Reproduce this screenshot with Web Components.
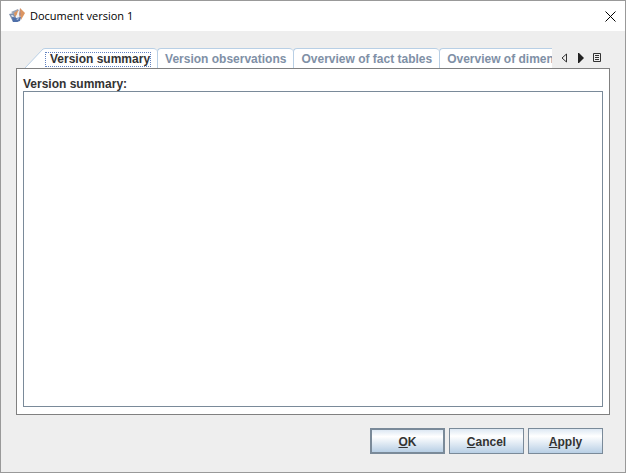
<!DOCTYPE html>
<html lang="en">
<head>
<meta charset="utf-8">
<meta name="viewport" content="width=device-width, initial-scale=1">
<title>Document version 1</title>
<style>
body {
    margin: 0;
    font: bold 12px/15px "Liberation Sans", Arial, sans-serif;
    color: #333;
    --line: #7a8a99;
    --tab-line: #b8cfe5;
    --panel-line: #808080;
}
</style>
</head>
<body>
<dialog-window>
    <title-bar slot="title">Document version 1</title-bar>
    <tab-pane>
        <tab-item slot="tab" active>Version summary</tab-item>
        <tab-item slot="tab">Version observations</tab-item>
        <tab-item slot="tab">Overview of fact tables</tab-item>
        <tab-item slot="tab">Overview of dimension tables</tab-item>
        <summary-form></summary-form>
    </tab-pane>
    <push-button slot="actions" primary><u>O</u>K</push-button>
    <push-button slot="actions"><u>C</u>ancel</push-button>
    <push-button slot="actions"><u>A</u>pply</push-button>
</dialog-window>

<script>
function template(html) {
  const t = document.createElement('template');
  t.innerHTML = html;
  return t;
}

class BaseElement extends HTMLElement {
  constructor() {
    super();
    this.attachShadow({mode: 'open'});
    this.shadowRoot.appendChild(this.constructor.template.content.cloneNode(true));
  }
}

class DialogWindow extends BaseElement {
  static template = template(`
<style>
:host {
    display: flex;
    flex-direction: column;
    box-sizing: border-box;
    height: 100vh;
    border: 1px solid #999;
    background: #eee;
}
main {
    flex: 1;
    display: flex;
    flex-direction: column;
    padding: 17px 15px 0;
    min-height: 0;
}
footer {
    display: flex;
    justify-content: flex-end;
    gap: 4px;
    padding: 13px 22px 18px;
}
</style>
<slot name="title"></slot>
<main><slot></slot></main>
<footer><slot name="actions"></slot></footer>
`);
}

class TitleBar extends BaseElement {
  static template = template(`
<style>
:host {
    display: flex;
    align-items: center;
    gap: 5px;
    height: 30px;
    padding: 0 7px 0 8px;
    background: #fff;
    color: #000;
    font: 11px/16px "Open Sans", "Noto Sans", sans-serif;
}
h1 {
    flex: 1;
    margin: 0;
    font: inherit;
}
button {
    display: flex;
    padding: 2px;
    border: 0;
    background: none;
    color: inherit;
}
svg { display: block; }
</style>
<svg width="16" height="16" viewBox="0 0 16 16" aria-hidden="true">
    <path d="M0 6l5-1 4 9H4z" fill="#7f90ad"/>
    <path d="M2 4l7-3 1 2-5 3z" fill="#98a3b6"/>
    <path d="M5 5l4-3v4L6 9z" fill="#dc965f"/>
    <path d="M9 3l3 3-1 4-4-1z" fill="#eef1f6"/>
    <path d="M11 0l5 5-4 7-1-6z" fill="#dc9562"/>
    <path d="M11 0l1 6-1 5-1-5z" fill="#ba8c7c"/>
    <path d="M3 9l4 1 5-1-1 4-3 1H4z" fill="#4f70aa"/>
    <path d="M2 7l2 0 1 2-2 0z" fill="#d3dae6"/>
    <path d="M7 11l3-1-1 2z" fill="#c4d0e4"/>
</svg>
<h1><slot></slot></h1>
<button type="button" aria-label="Close">
    <svg width="11" height="11" viewBox="0 0 11 11" fill="none" stroke="currentColor"><path d="M.5.5l10 10M10.500.5l-10 10"/></svg>
</button>
`);
}

class TabPane extends BaseElement {
  static template = template(`
<style>
:host {
    flex: 1;
    display: flex;
    flex-direction: column;
    min-height: 0;
}
.strip {
    display: flex;
    height: 20px;
    padding-left: 9px;
}
.tabs {
    flex: 1;
    display: flex;
    min-width: 0;
    overflow: hidden;
}
nav {
    display: flex;
    align-items: center;
    gap: 3px;
    padding: 0 7px;
}
button {
    display: flex;
    padding: 1px;
    border: 0;
    background: none;
}
.panel {
    flex: 1;
    display: flex;
    min-height: 0;
    border: 1px solid var(--panel-line);
    background: #fff;
}
</style>
<div class="strip">
    <div class="tabs" role="tablist"><slot name="tab"></slot></div>
    <nav>
        <button type="button" aria-label="Previous tabs"><svg width="10" height="10" viewBox="0 0 10 10"><path d="M6.500 1v8L2 5z" fill="none" stroke="#333"/></svg></button>
        <button type="button" aria-label="Next tabs"><svg width="12" height="10" viewBox="0 0 12 10"><path d="M3 0h1l5 5-5 5H3z" fill="#222"/></svg></button>
        <button type="button" aria-label="All tabs"><svg width="10" height="10" viewBox="0 0 10 10" fill="none" stroke="#333"><path d="M1.500.5h7v8h-7zM3 2.500h4M3 4.500h4M3 6.500h4"/></svg></button>
    </nav>
</div>
<div class="panel" role="tabpanel"><slot></slot></div>
`);
}

class TabItem extends BaseElement {
  static template = template(`
<style>
:host {
    flex: none;
    display: flex;
    color: #8090a6;
}
:host([active]) { color: #333; }
svg { display: none; }
:host([active]) svg { display: block; }
button {
    padding: 2px 7px 0;
    border: solid var(--tab-line);
    border-width: 1px 0 0 1px;
    border-radius: 4px 4px 0 0;
    background: #fff;
    color: inherit;
    font: inherit;
    white-space: nowrap;
}
:host([active]) button {
    padding: 2px 6px 0 0;
    border-left: 0;
    border-top-left-radius: 0;
}
span { display: block; }
:host([active]) span {
    padding: 0 1px 0 5px;
    outline: 1px dotted #6382bf;
    outline-offset: -1px;
}
</style>
<svg width="20" height="20" viewBox="0 0 20 20" aria-hidden="true">
    <path d="M0 20L18 1l2-.5V20z" fill="#fff"/>
    <path d="M0 20L18 1l2-.5" fill="none" stroke="#b8cfe5"/>
</svg>
<button type="button" role="tab"><span><slot></slot></span></button>
`);

  connectedCallback() {
    this.shadowRoot.querySelector('button').setAttribute('aria-selected', this.hasAttribute('active'));
  }
}

class SummaryForm extends BaseElement {
  static template = template(`
<style>
:host {
    flex: 1;
    display: flex;
    flex-direction: column;
    padding: 8px 6px 7px;
}
label { line-height: 14px; }
textarea {
    flex: 1;
    box-sizing: border-box;
    width: 100%;
    margin: 0;
    padding: 2px;
    border: 1px solid var(--line);
    outline: 0;
    resize: none;
    font: 12px/15px "Liberation Sans", Arial, sans-serif;
}
</style>
<label for="summary">Version summary:</label>
<textarea id="summary"></textarea>
`);
}

class PushButton extends BaseElement {
  static template = template(`
<style>
button {
    display: block;
    box-sizing: border-box;
    width: 75px;
    height: 26px;
    padding: 2px 0 0;
    border: 1px solid var(--line);
    background: linear-gradient(#dde8f3, #fff 30%, #b8cfe5);
    color: inherit;
    font: inherit;
}
:host { display: block; }
:host([primary]) button { border-width: 2px; }
</style>
<button type="button"><slot></slot></button>
`);
}

window.customElements.define('dialog-window', DialogWindow);
window.customElements.define('title-bar', TitleBar);
window.customElements.define('tab-pane', TabPane);
window.customElements.define('tab-item', TabItem);
window.customElements.define('summary-form', SummaryForm);
window.customElements.define('push-button', PushButton);
</script>
</body>
</html>
